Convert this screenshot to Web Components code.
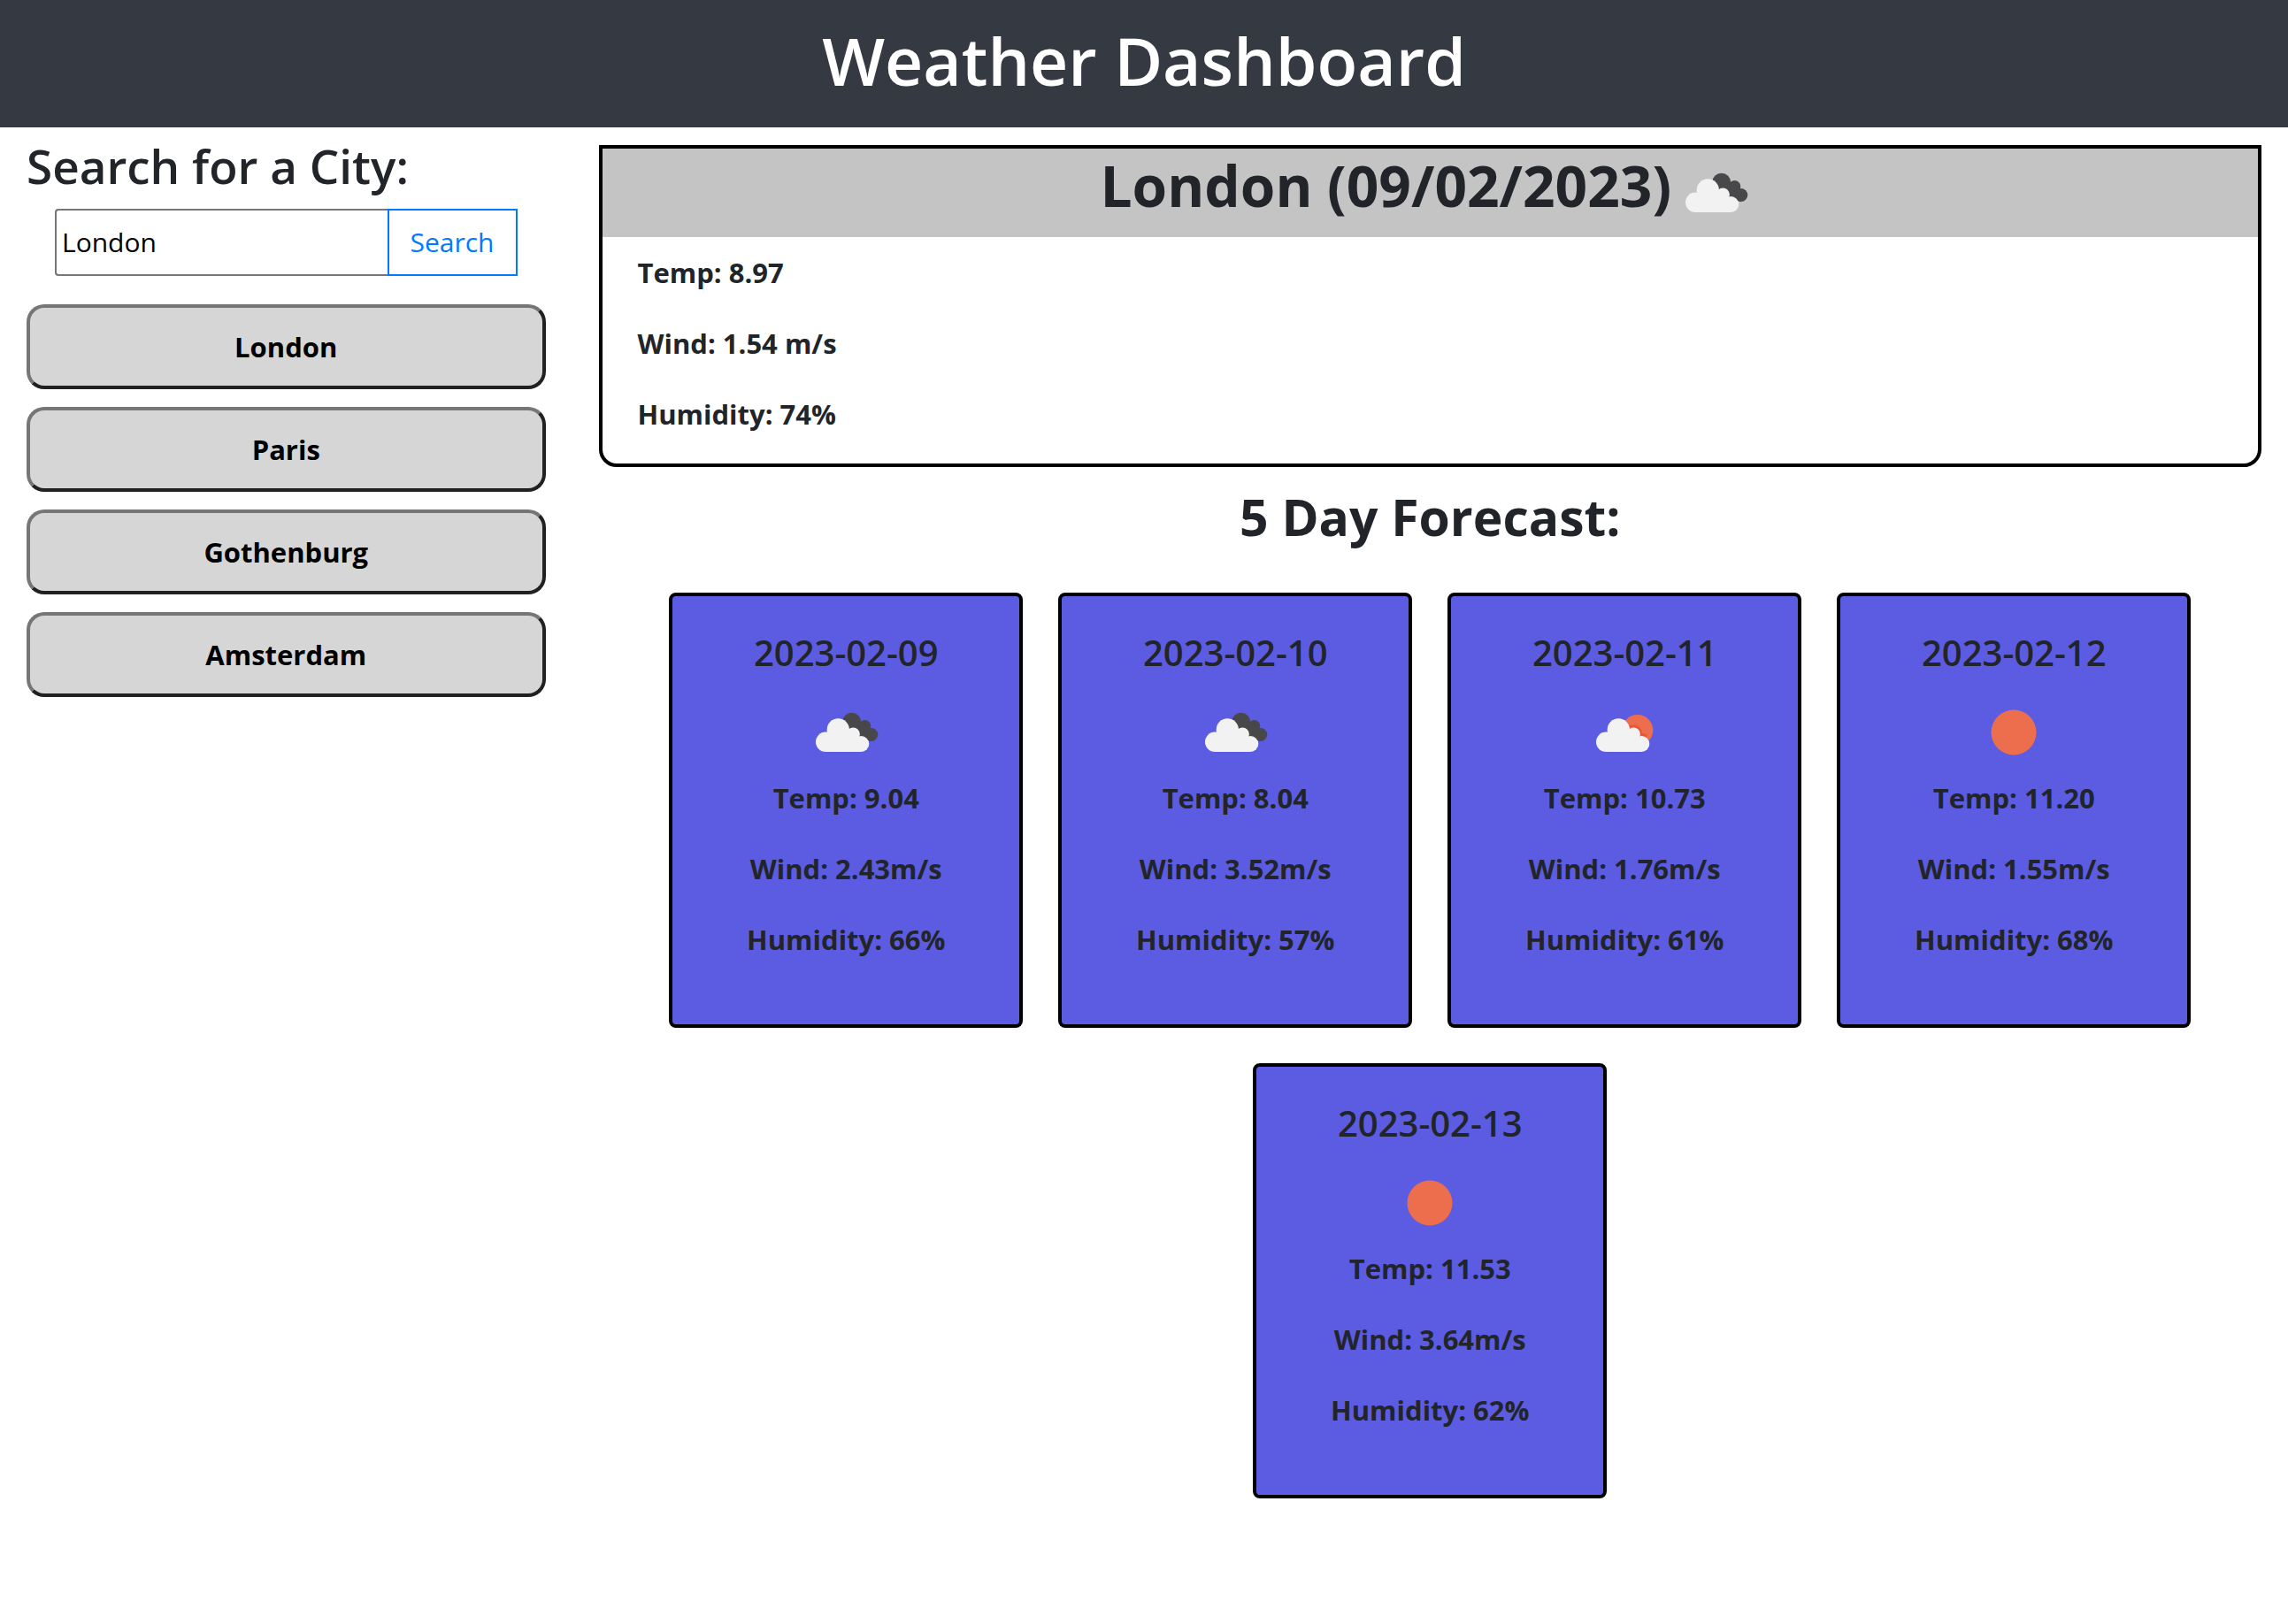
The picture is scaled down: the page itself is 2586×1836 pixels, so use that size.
<!DOCTYPE html>
<html lang="en">
<head>
<meta charset="utf-8">
<title>Weather Dashboard</title>
<style>
  body {
    margin: 0;
    background: #fff;
    color: #212529;
    font-family: "Open Sans", "Noto Sans", sans-serif;
    font-size: 31px;
    line-height: 48px;
  }
</style>
</head>
<body>
<weather-app></weather-app>

<script>
const define = (name, html, setup) => {
  const template = document.createElement('template');
  template.innerHTML = '<style>*{box-sizing:border-box}</style>' + html;
  customElements.define(name, class extends HTMLElement {
    constructor() {
      super();
      this.attachShadow({ mode: 'open' }).append(template.content.cloneNode(true));
    }
    connectedCallback() {
      if (setup) setup(this, this.shadowRoot);
    }
  });
};

const cloud = '<g fill="#f2f2f2"><circle cx="27.200" cy="60.800" r="11.200"/><circle cx="41.300" cy="47" r="12.700"/><circle cx="58.300" cy="52" r="7.600"/><circle cx="67.300" cy="63" r="9"/><path d="M27 72V52L34 46H50L58 50L64 58L67.300 72Z"/></g>';
const icons = {
  clouds: '<g fill="#48484a"><circle cx="56.700" cy="38.200" r="10.500"/><circle cx="71.500" cy="42.800" r="6.800"/><circle cx="78.700" cy="52.500" r="7.600"/><path d="M56.700 38H65.500L71.500 40L77.500 45L78.700 60L70 57L56 54Z"/></g>' + cloud,
  sunny: '<circle cx="64.800" cy="47.500" r="17.500" fill="#ec6e4c"/><path fill="none" stroke="#e8452a" stroke-opacity=".6" stroke-width="3" d="M54 42.500Q57 44 62 43Q68 45 69 52L75 54"/><g transform="translate(2 0)">' + cloud + '</g>',
  clear: '<circle cx="50" cy="50" r="25.500" fill="#ec6e4c"/>'
};

define('weather-icon', `
  <style>
    :host { display: block; width: 100px; height: 100px; flex: none; }
    svg { display: block; width: 100%; height: 100%; }
  </style>
  <svg viewBox="0 0 100 100" aria-hidden="true"></svg>`,
  (el, root) => {
    root.querySelector('svg').innerHTML = icons[el.getAttribute('name')];
  });

define('app-header', `
  <style>
    :host { display: block; padding: 20px 32px 28px; background: #353a42; color: #fff; text-align: center; }
    h1 { margin: 0; font-size: 75px; line-height: 96px; font-weight: 600; }
  </style>
  <h1><slot></slot></h1>`);

define('city-search', `
  <style>
    :host { display: block; }
    label { display: block; margin-bottom: 12px; font-size: 53px; line-height: 72px; font-weight: 600; }
    form { display: flex; height: 76px; margin: 0 32px; }
    input, button { font: inherit; font-size: 30px; background: #fff; }
    input { flex: 1; min-width: 0; padding: 0 6px; border: 2px solid #767676; border-right: 0; border-radius: 4px 0 0 4px; color: #000; }
    button { padding: 0 24px; border: 2px solid #007bff; color: #007bff; }
  </style>
  <label for="city">Search for a City:</label>
  <form onsubmit="return false">
    <input id="city" type="text" value="London">
    <button type="submit">Search</button>
  </form>`);

define('city-button', `
  <style>
    :host { display: block; }
    button { display: block; width: 100%; height: 96px; border: 4px solid; border-color: #767676 #212121 #212121 #767676; border-radius: 20px; background: #d6d6d6; color: #000; font: inherit; font-weight: 700; }
  </style>
  <button type="button"><slot></slot></button>`);

define('weather-stats', `
  <style>
    :host { display: block; font-weight: 700; }
    p { margin: 0 0 32px; }
  </style>
  <p id="temp"></p><p id="wind"></p><p id="humidity"></p>`,
  (el, root) => {
    root.getElementById('temp').textContent = 'Temp: ' + el.getAttribute('temp');
    root.getElementById('wind').textContent = 'Wind: ' + el.getAttribute('wind');
    root.getElementById('humidity').textContent = 'Humidity: ' + el.getAttribute('humidity');
  });

define('current-weather', `
  <style>
    :host { display: block; border: 4px solid #000; border-radius: 0 0 20px 20px; }
    header { display: flex; justify-content: center; align-items: flex-start; background: #c4c4c4; }
    h2 { margin: 0; font-size: 64px; line-height: 84px; font-weight: 700; }
    section { display: flow-root; padding: 16px 40px 0; }
  </style>
  <header><h2><slot name="title"></slot></h2><slot name="icon"></slot></header>
  <section><slot></slot></section>`);

define('forecast-card', `
  <style>
    :host { display: flex; flex-direction: column; align-items: center; width: 400px; padding: 40px; border: 4px solid #000; border-radius: 8px; background: #5c5ce2; text-align: center; box-sizing: border-box; }
    h3 { margin: 0 0 16px; font-size: 40px; line-height: 48px; font-weight: 600; }
  </style>
  <h3></h3><slot></slot>`,
  (el, root) => {
    root.querySelector('h3').textContent = el.getAttribute('date');
  });

define('forecast-list', `
  <style>
    :host { display: block; }
    h2 { margin: 0; padding: 20px 0 50px; font-size: 57px; line-height: 72px; font-weight: 700; text-align: center; }
    div { display: flex; flex-wrap: wrap; justify-content: center; gap: 40px; }
  </style>
  <h2>5 Day Forecast:</h2>
  <div><slot></slot></div>`);

define('weather-app', `
  <style>
    :host { display: block; }
    main { display: flex; }
    aside { width: 25%; padding: 8px 30px; }
    .report { width: 75%; padding: 20px 30px; }
    nav { display: flex; flex-direction: column; gap: 20px; margin-top: 32px; }
  </style>
  <app-header>Weather Dashboard</app-header>
  <main>
    <aside>
      <city-search></city-search>
      <nav aria-label="Recent cities">
        <city-button>London</city-button>
        <city-button>Paris</city-button>
        <city-button>Gothenburg</city-button>
        <city-button>Amsterdam</city-button>
      </nav>
    </aside>
    <div class="report">
      <current-weather>
        <span slot="title">London (09/02/2023)</span>
        <weather-icon slot="icon" name="clouds"></weather-icon>
        <weather-stats temp="8.97" wind="1.54 m/s" humidity="74%"></weather-stats>
      </current-weather>
      <forecast-list>
        <forecast-card date="2023-02-09"><weather-icon name="clouds"></weather-icon><weather-stats temp="9.04" wind="2.43m/s" humidity="66%"></weather-stats></forecast-card>
        <forecast-card date="2023-02-10"><weather-icon name="clouds"></weather-icon><weather-stats temp="8.04" wind="3.52m/s" humidity="57%"></weather-stats></forecast-card>
        <forecast-card date="2023-02-11"><weather-icon name="sunny"></weather-icon><weather-stats temp="10.73" wind="1.76m/s" humidity="61%"></weather-stats></forecast-card>
        <forecast-card date="2023-02-12"><weather-icon name="clear"></weather-icon><weather-stats temp="11.20" wind="1.55m/s" humidity="68%"></weather-stats></forecast-card>
        <forecast-card date="2023-02-13"><weather-icon name="clear"></weather-icon><weather-stats temp="11.53" wind="3.64m/s" humidity="62%"></weather-stats></forecast-card>
      </forecast-list>
    </div>
  </main>`);
</script>
</body>
</html>
